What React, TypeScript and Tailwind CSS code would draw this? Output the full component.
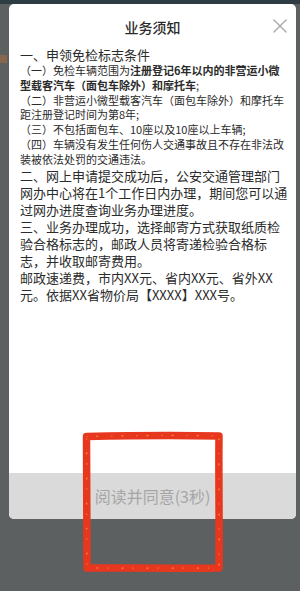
import React from "react";

const font = { fontFamily: '"Noto Sans CJK SC", "Noto Sans", sans-serif' };

function CloseIcon() {
  return (
    <svg width="14" height="14" viewBox="0 0 14 14" fill="none" aria-hidden>
      <path d="M1 1L13 13M13 1L1 13" stroke="#a8a8a8" strokeWidth="1.4" strokeLinecap="round" />
    </svg>
  );
}

// the hand-drawn red box that was scribbled over the screenshot
function Scribble() {
  const d =
    "M8.5 8.5 C50 7.5 100 7 141 8 C140.5 50 141.5 100 141 140 C100 140.5 50 140 9 140 C8.5 100 9 50 8.5 8.5 Z";
  return (
    <svg
      className="pointer-events-none absolute left-[78px] top-[428px]"
      width="150"
      height="150"
      viewBox="0 0 150 150"
      fill="none"
      aria-hidden
    >
      <path d={d} stroke="#e8371f" strokeWidth="7.5" strokeLinejoin="round" />
      <path d={d} stroke="#f6a23c" strokeWidth="1.2" strokeDasharray="1 9 2 13" opacity="0.8" />
    </svg>
  );
}

export default function App() {
  return (
    <div className="relative h-[591px] w-[300px] overflow-hidden bg-[#5d6060]" style={font}>
      <div className="h-[4px] bg-[#2e3d44]" />
      <div className="absolute left-0 top-[55px] h-[8px] w-[7px] bg-[#86664c]" />

      <div className="ml-[9px] flex h-[515px] w-[287px] flex-col overflow-hidden rounded-[5px] bg-white">
        <div className="relative h-[42px] pt-[14px] text-center">
          <h1 className="text-[14px] font-medium leading-[18px] text-[#2b2b2b]">业务须知</h1>
          <button className="absolute right-[9px] top-[15px]">
            <CloseIcon />
          </button>
        </div>

        <div className="ml-[11px] w-[269px] text-[#2b2b2b]">
          <p className="text-[13px] leading-[17px]">一、申领免检标志条件</p>
          <div className="text-[11px] leading-[14.8px]">
            <p>
              <span>（一）免检车辆范围为</span>
              <b className="font-bold">注册登记6年以内的非营运小微</b>
              <b className="font-bold">型载客汽车（面包车除外）和摩托车</b>
              <span>;</span>
            </p>
            <p>（二）非营运小微型载客汽车（面包车除外）和摩托车距注册登记时间为第8年;</p>
            <p>（三）不包括面包车、10座以及10座以上车辆;</p>
            <p>（四）车辆没有发生任何伤人交通事故且不存在非法改装被依法处罚的交通违法。</p>
          </div>
          <div className="text-[13px] leading-[17px]">
            <p>二、网上申请提交成功后，公安交通管理部门网办中心将在1个工作日内办理，期间您可以通过网办进度查询业务办理进度。</p>
            <p>三、业务办理成功，选择邮寄方式获取纸质检验合格标志的，邮政人员将寄递检验合格标志，并收取邮寄费用。</p>
            <p>邮政速递费，市内XX元、省内XX元、省外XX元。依据XX省物价局【XXXX】XXX号。</p>
          </div>
        </div>

        <div className="flex-1" />

        <button className="flex h-[46px] items-center justify-center bg-[#dadada] text-[16px] text-[#a6a6a6]">
          阅读并同意(3秒)
        </button>
      </div>

      <Scribble />
    </div>
  );
}
